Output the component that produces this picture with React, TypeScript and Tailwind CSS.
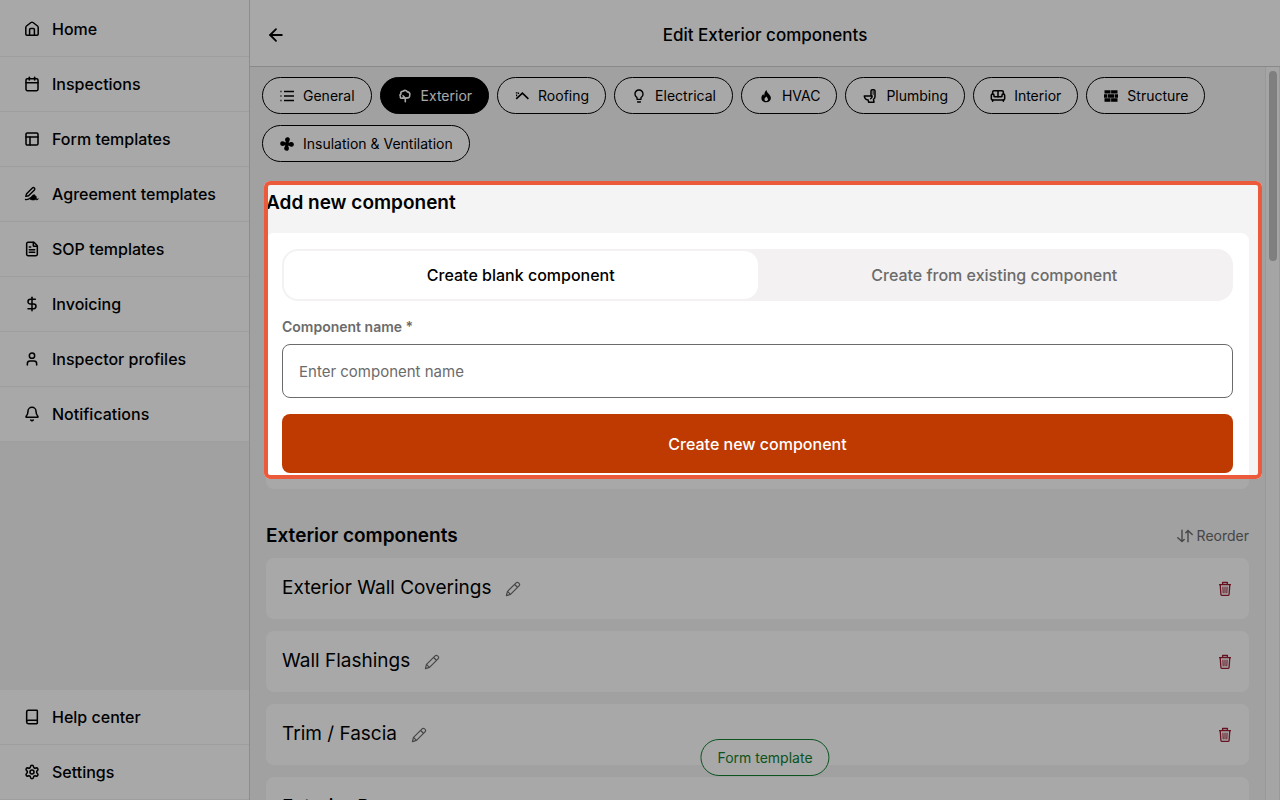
import { useState } from "react";
import type { ReactNode } from "react";
import {
  ArrowLeft,
  Bell,
  Book,
  Calendar,
  DollarSign,
  FileText,
  PanelsTopLeft,
  Settings,
  Sofa,
  User,
} from "lucide-react";
import { MdOutlineLightbulb } from "react-icons/md";

const HomeIcon = () => (
  <svg viewBox="0 0 16 16" className="w-4 h-4" fill="none" stroke="currentColor" strokeWidth="1.5" strokeLinejoin="round">
    <path d="M1.8 6.4c0-.6.2-1 .7-1.4L7 1.5c.6-.4 1.4-.4 2 0L13.5 5c.5.4.7.8.7 1.4V13c0 .7-.5 1.2-1.2 1.2H3c-.7 0-1.200-.5-1.200-1.200z" />
    <path d="M5.6 14V8.600c0-.6.4-1 1-1h2.800c.6 0 1 .4 1 1V14" />
  </svg>
);

const SignIcon = () => (
  <svg viewBox="0 0 16 16" className="w-4 h-4" fill="none" stroke="currentColor" strokeWidth="1.4" strokeLinecap="round" strokeLinejoin="round">
    <path d="M1.800 10.400 2.600 7.700 8.400 2a1.400 1.400 0 0 1 2 2L4.600 9.700z" />
    <path d="M1.500 13.500c2.500.5 3.500-.3 5.200-1.800" />
    <path
      d="M6.500 13.200c.2-2.700 2-4.500 3.700-4.500.9 0 1 .7.6 1.400 1.200-.3 1.900.5 1.500 1.700-.2.900.7 1.400 2.200.9-.7 1.300-2.200 1.400-3.200.8-1.500.8-3.300.8-4.800-.3z"
      fill="currentColor"
      strokeWidth=".6"
    />
  </svg>
);

const ListIcon = () => (
  <svg viewBox="0 0 16 16" className="w-4 h-4" fill="none" stroke="currentColor" strokeWidth="1.4">
    <path d="M5 3.500h10M5 8h10M5 12.500h10" />
    <path d="M1.200 3.500h1.500M1.200 8h1.500M1.200 12.500h1.500" strokeOpacity=".7" />
  </svg>
);

const TreeIcon = () => (
  <svg viewBox="0 0 16 16" className="w-4 h-4" fill="none" stroke="currentColor" strokeWidth="1.6" strokeLinejoin="round" strokeLinecap="round">
    <path d="M7.600 10.300 5.800 9.900C4.300 10.900 2.800 9.700 3.400 8.300 2.600 7.400 2.900 6.300 4 6 3.300 4.300 4.600 2.900 6.200 3.300 7.500 1.900 9.600 2.200 10.300 3.900 12.300 3.900 13.400 5.700 12.700 7.200 13 9 11.600 10.200 10 9.700L8.300 10.500V13.800" />
    <path d="M6 7.800 8.200 10" />
  </svg>
);

const RoofIcon = () => (
  <svg viewBox="0 0 16 16" className="w-4 h-4" fill="none" stroke="currentColor" strokeWidth="1.6">
    <path d="M2.200 10.900 8.400 5.200l6 5.700" />
    <path d="M1.800 4.800h1.700M2.600 6.600v1.600M4.500 4.500v1.600" strokeWidth="1.2" />
  </svg>
);

const FlameIcon = () => (
  <svg viewBox="0 0 16 16" className="w-4 h-4" fill="currentColor">
    <path
      fillRule="evenodd"
      d="M8.600 2c.1 1.800 1 2.700 2.200 4 1.200 1.300 2.100 2.500 2.100 4.100 0 2.400-2 4.200-4.700 4.200S3.400 12.600 3.400 10.200c0-1.700.7-2.900 1.900-4.100.1.9.4 1.400 1 1.700C6.200 5.300 6.900 3.300 8.600 2zM8.500 8.600c-1.300 1-2 1.800-2 2.800 0 1 .8 1.600 1.800 1.600s1.700-.7 1.700-1.500c0-1.100-1-1.600-1.500-2.900z"
    />
  </svg>
);

const ToiletIcon = () => (
  <svg viewBox="0 0 16 16" className="w-4 h-4" fill="none" stroke="currentColor" strokeWidth="1.5" strokeLinejoin="round">
    <path d="M9 8V3c0-.8.5-1.300 1.300-1.300h1.400c.8 0 1.300.5 1.300 1.300v5.800c0 1.200-.6 2-1.500 2.500l.5 2.900H6.600l-.4-2.100C3.900 11.600 2.500 10.200 2.300 8z" />
    <path d="M9 8h1.200c0 1.700-.8 2.600-2 3" />
    <path d="M11.200 2.500v4.300" strokeOpacity=".6" />
  </svg>
);

const BrickIcon = () => (
  <svg viewBox="0 0 16 16" className="w-4 h-4" fill="currentColor">
    <path d="M1.500 2.200h6v3.400h-6zM8.100 2.200h6.400v3.400H8.100zM1 6.200h3v3.500H1zM4.600 6.200h6.500v3.500H4.600zM11.700 6.200H15v3.500h-3.300zM1.500 10.300h6v3.500h-6zM8.100 10.300h6.400v3.500H8.100z" />
  </svg>
);

const FanIcon = () => (
  <svg viewBox="0 0 16 16" className="w-4 h-4" fill="currentColor">
    <path d="M7.300 6.300C5.600 5 5.500 1.300 8.300 1.200c2.900 0 3.200 2.600 1.300 5.200z" />
    <path d="M9.700 7.300c1.300-1.700 5-1.800 5.100 1 0 2.900-2.600 3.200-5.200 1.300z" />
    <path d="M8.700 9.700c1.700 1.300 1.800 5-1 5.100-2.900 0-3.200-2.600-1.300-5.200z" />
    <path d="M6.300 8.700C5 10.400 1.300 10.500 1.200 7.700c0-2.900 2.600-3.200 5.200-1.300z" />
    <circle cx="8" cy="8" r="2.300" />
  </svg>
);

const ReorderIcon = () => (
  <svg viewBox="0 0 16 16" className="w-4 h-4" fill="none" stroke="currentColor" strokeWidth="1.4" strokeLinecap="round" strokeLinejoin="round">
    <path d="M.8 9.800 5 13.600 7.200 11.500M5 13.600V2.200M8.800 4.700 11 2.400l4.200 4M11 2.400v11.400" />
  </svg>
);

const PencilIcon = () => (
  <svg viewBox="0 0 16 16" className="w-4 h-4" fill="none" stroke="currentColor" strokeWidth="1.2" strokeLinejoin="round">
    <path d="M1.400 14.600 2.500 10.400 11.100 1.900c.8-.8 1.700-.8 2.400-.1l.6.6c.8.7.7 1.700-.1 2.400L5.500 13.400z" />
    <path d="M9.600 3.500 12.500 6.300M2.500 10.400 5.500 13.400" />
  </svg>
);

const TrashIcon = () => (
  <svg viewBox="0 0 16 16" className="w-4 h-4" fill="none" stroke="currentColor" strokeWidth="1.3" strokeLinejoin="round">
    <path d="M2 3.600h12M5.600 3.400V1.500h4.800v1.900M3.200 3.600l.7 9.700c.1.700.5 1.100 1.200 1.100h5.800c.7 0 1.100-.4 1.200-1.100l.7-9.700" />
    <path d="M5.900 5.700 6.200 12.300M8 5.700v6.600M10.100 5.700 9.800 12.300" strokeWidth="1" />
  </svg>
);

const iconClass = "w-4 h-4";

const mainLinks = [
  { label: "Home", icon: <HomeIcon /> },
  { label: "Inspections", icon: <Calendar className={iconClass} strokeWidth={2.3} /> },
  { label: "Form templates", icon: <PanelsTopLeft className={iconClass} strokeWidth={2.3} /> },
  { label: "Agreement templates", icon: <SignIcon /> },
  { label: "SOP templates", icon: <FileText className={iconClass} strokeWidth={2.3} /> },
  { label: "Invoicing", icon: <DollarSign className={iconClass} strokeWidth={2.3} /> },
  { label: "Inspector profiles", icon: <User className={iconClass} strokeWidth={2.3} /> },
  { label: "Notifications", icon: <Bell className={iconClass} strokeWidth={2.3} /> },
];

const bottomLinks = [
  { label: "Help center", icon: <Book className={iconClass} strokeWidth={2.3} /> },
  { label: "Settings", icon: <Settings className={iconClass} strokeWidth={2.3} /> },
];

const categories = [
  { label: "General", icon: <ListIcon /> },
  { label: "Exterior", icon: <TreeIcon /> },
  { label: "Roofing", icon: <RoofIcon /> },
  { label: "Electrical", icon: <MdOutlineLightbulb className={iconClass} /> },
  { label: "HVAC", icon: <FlameIcon /> },
  { label: "Plumbing", icon: <ToiletIcon /> },
  { label: "Interior", icon: <Sofa className={iconClass} strokeWidth={2.3} /> },
  { label: "Structure", icon: <BrickIcon /> },
  { label: "Insulation & Ventilation", icon: <FanIcon /> },
];

const components = ["Exterior Wall Coverings", "Wall Flashings", "Trim / Fascia", "Exterior Doors"];

const SideLink = ({ label, icon }: { label: string; icon: ReactNode }) => (
  <li className="border-b border-[#f0f0f0]">
    <a href="#" className="flex items-center gap-3 h-[54px] px-6 font-medium">
      {icon}
      <span>{label}</span>
    </a>
  </li>
);

const Sidebar = () => (
  <nav className="flex flex-col justify-between w-[250px] shrink-0 border-r border-[#d6d6d6] bg-[#f4f4f4]">
    <ul className="bg-white pt-0.5">
      {mainLinks.map((link) => (
        <SideLink key={link.label} {...link} />
      ))}
    </ul>
    <ul className="bg-white">
      {bottomLinks.map((link) => (
        <SideLink key={link.label} {...link} />
      ))}
    </ul>
  </nav>
);

const AddComponent = () => {
  const [mode, setMode] = useState("blank");
  const tab = "flex-1 rounded-[14px] font-medium cursor-pointer";
  return (
    <section className="relative">
      <h2 className="text-[19px] font-semibold leading-[30px]">Add new component</h2>
      <form className="mt-[15px] p-4 rounded-lg bg-white" onSubmit={(e) => e.preventDefault()}>
        <div className="flex h-[52px] p-0.5 rounded-2xl bg-[#f3f1f2]">
          <button
            type="button"
            onClick={() => setMode("blank")}
            className={mode === "blank" ? `${tab} bg-white` : `${tab} text-[#6b6b6b]`}
          >
            Create blank component
          </button>
          <button
            type="button"
            onClick={() => setMode("existing")}
            className={mode === "existing" ? `${tab} bg-white` : `${tab} text-[#6b6b6b]`}
          >
            Create from existing component
          </button>
        </div>
        <label htmlFor="component-name" className="block mt-4 text-sm font-semibold text-[#6b6b6b]">
          Component name *
        </label>
        <input
          id="component-name"
          type="text"
          placeholder="Enter component name"
          className="block w-full h-[54px] mt-[7px] px-4 rounded-lg border border-[#6b6b6b] bg-white text-[15px] placeholder:text-[#6b6b6b]"
        />
        <button type="submit" className="block w-full h-[59px] mt-4 rounded-lg bg-[#be3a00] text-white font-medium">
          Create new component
        </button>
      </form>
      {/* spotlight: the ring's shadow dims the rest of the page */}
      <div className="absolute -top-[7px] -left-0.5 -right-[13px] bottom-[10px] z-20 rounded-md border-4 border-[#ec5a3c] shadow-[0_0_0_2000px_rgba(0,0,0,0.34)] pointer-events-none" />
    </section>
  );
};

const ComponentList = () => (
  <section className="mt-8">
    <div className="flex items-center justify-between h-[30px]">
      <h2 className="text-[19px] font-semibold leading-[30px]">Exterior components</h2>
      <button type="button" className="flex items-center gap-1 text-sm text-[#6b6b6b]">
        <ReorderIcon />
        Reorder
      </button>
    </div>
    <ul className="flex flex-col gap-3 mt-[7px]">
      {components.map((name) => (
        <li key={name} className="flex items-center h-[61px] px-4 rounded-lg bg-white">
          <span className="text-[19px]">{name}</span>
          <button type="button" aria-label={`Rename ${name}`} className="ml-3.5 text-[#6b6b6b]">
            <PencilIcon />
          </button>
          <button type="button" aria-label={`Delete ${name}`} className="ml-auto text-[#9b1c31]">
            <TrashIcon />
          </button>
        </li>
      ))}
    </ul>
  </section>
);

const App = () => {
  const [active, setActive] = useState("Exterior");
  return (
    <div className="flex h-screen overflow-hidden bg-[#f4f4f4] text-base text-black font-[Inter,sans-serif]">
      <Sidebar />
      <div className="relative flex flex-col flex-1 min-w-0">
        <header className="flex items-center h-[67px] shrink-0 px-4 pt-1 border-b border-[#d0d0d0] bg-white">
          <button type="button" aria-label="Back">
            <ArrowLeft className="w-5 h-5" strokeWidth={2.2} />
          </button>
          <h1 className="flex-1 pr-5 pt-0.5 text-center text-[17px] font-medium">Edit Exterior components</h1>
        </header>
        <div className="flex flex-1 min-h-0">
          <main className="flex-1 min-w-0 px-4 pt-2.5">
            <div className="flex flex-wrap gap-x-2 gap-y-[11px] -mx-1">
              {categories.map(({ label, icon }) => (
                <button
                  key={label}
                  type="button"
                  onClick={() => setActive(label)}
                  className={
                    label === active
                      ? "flex items-center gap-2 h-[37px] px-4 rounded-full border border-black bg-black text-white text-sm"
                      : "flex items-center gap-2 h-[37px] px-4 rounded-full border border-black bg-white text-sm"
                  }
                >
                  {icon}
                  {label}
                </button>
              ))}
            </div>
            <div className="mt-[26px]">
              <AddComponent />
              <ComponentList />
            </div>
          </main>
          <div className="w-[15px] shrink-0 border-x border-[#e8e8e8] bg-[#fafafa] px-[3px] pt-1">
            <div className="w-2 h-[190px] rounded-full bg-[#c1c1c1]" />
          </div>
        </div>
        <button
          type="button"
          className="absolute bottom-6 left-1/2 -translate-x-1/2 h-[37px] px-4 rounded-full border border-[#118030] bg-white text-sm text-[#118030]"
        >
          Form template
        </button>
      </div>
    </div>
  );
};

export default App;
